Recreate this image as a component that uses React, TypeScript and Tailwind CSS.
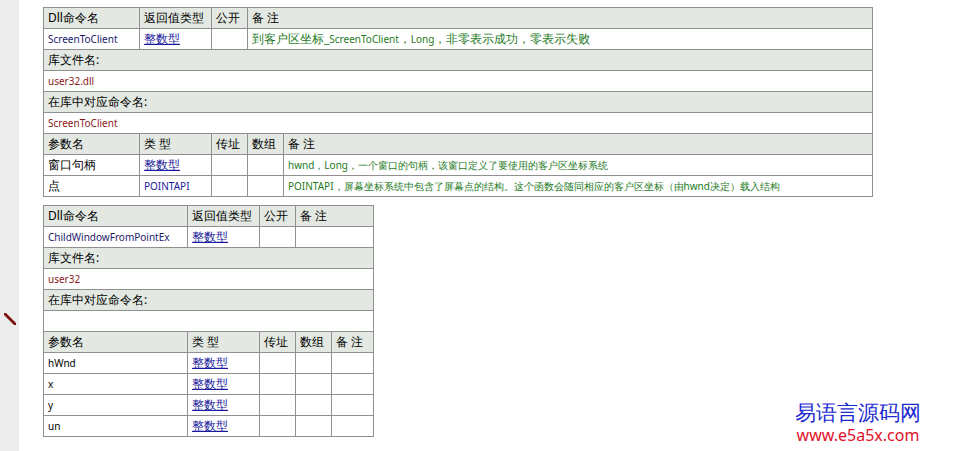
const cjk = "font-['Noto_Sans_CJK_SC'] text-[12px]";
const mono = "font-['Liberation_Mono'] text-[10px]";

function Cell({ children, head, className = '', colSpan }: { children?: React.ReactNode; head?: boolean; className?: string; colSpan?: number }) {
  return (
    <td colSpan={colSpan} className={`border border-[#909090] h-[21px] px-1 py-0 leading-[20px] whitespace-nowrap ${head ? 'bg-[#e3e9e2] text-black ' + cjk : ''} ${className}`}>
      {children}
    </td>
  );
}

const link = `${cjk} text-[#1a1a9c] underline`;
const green = 'text-[#1e7a1e]';
const red = `${mono} text-[#8b1a1a]`;

export default function App() {
  return (
    <div className="w-[953px] h-[451px] bg-white flex overflow-hidden">
      <div className="w-[19px] bg-[#ececec] flex items-start pt-[312px] justify-center">
        <svg width="14" height="14" viewBox="0 0 14 14"><path d="M1 1 L3 1 L13 11 L13 13 L11 13 L1 3 Z" fill="#7a1010" /></svg>
      </div>
      <div className="pl-[24px] pt-[7px] flex flex-col gap-[8px] relative flex-1">
        <table className="border-collapse table-fixed w-[830px]">
          <colgroup>
            <col className="w-[96px]" /><col className="w-[72px]" /><col className="w-[36px]" /><col className="w-[36px]" /><col />
          </colgroup>
          <tbody>
            <tr><Cell head>Dll命令名</Cell><Cell head>返回值类型</Cell><Cell head>公开</Cell><Cell head colSpan={2}>备 注</Cell></tr>
            <tr><Cell className={`${mono} text-[#1a1a6c]`}>ScreenToClient</Cell><Cell className={link}>整数型</Cell><Cell /><Cell colSpan={2} className={`${cjk} ${green}`}>到客户区坐标_<span className={mono}>ScreenToClient</span>，<span className={mono}>Long</span>，非零表示成功，零表示失败</Cell></tr>
            <tr><Cell head colSpan={5}>库文件名:</Cell></tr>
            <tr><Cell colSpan={5} className={red}>user32.dll</Cell></tr>
            <tr><Cell head colSpan={5}>在库中对应命令名:</Cell></tr>
            <tr><Cell colSpan={5} className={red}>ScreenToClient</Cell></tr>
            <tr><Cell head>参数名</Cell><Cell head>类 型</Cell><Cell head>传址</Cell><Cell head>数组</Cell><Cell head>备 注</Cell></tr>
            <tr><Cell className={cjk}>窗口句柄</Cell><Cell className={link}>整数型</Cell><Cell /><Cell /><Cell className={`${mono} ${green}`}>hwnd，Long，一个窗口的句柄，该窗口定义了要使用的客户区坐标系统</Cell></tr>
            <tr><Cell className={cjk}>点</Cell><Cell className={`${mono} text-[#1a1a9c]`}>POINTAPI</Cell><Cell /><Cell /><Cell className={`${mono} ${green} overflow-hidden`}>POINTAPI，屏幕坐标系统中包含了屏幕点的结构。这个函数会随同相应的客户区坐标（由hwnd决定）载入结构</Cell></tr>
          </tbody>
        </table>
        <table className="border-collapse table-fixed w-[331px]">
          <colgroup>
            <col className="w-[144px]" /><col className="w-[72px]" /><col className="w-[36px]" /><col className="w-[36px]" /><col />
          </colgroup>
          <tbody>
            <tr><Cell head>Dll命令名</Cell><Cell head>返回值类型</Cell><Cell head>公开</Cell><Cell head colSpan={2}>备 注</Cell></tr>
            <tr><Cell className={`${mono} text-[#1a1a6c]`}>ChildWindowFromPointEx</Cell><Cell className={link}>整数型</Cell><Cell /><Cell colSpan={2} /></tr>
            <tr><Cell head colSpan={5}>库文件名:</Cell></tr>
            <tr><Cell colSpan={5} className={red}>user32</Cell></tr>
            <tr><Cell head colSpan={5}>在库中对应命令名:</Cell></tr>
            <tr><Cell colSpan={5} /></tr>
            <tr><Cell head>参数名</Cell><Cell head>类 型</Cell><Cell head>传址</Cell><Cell head>数组</Cell><Cell head>备 注</Cell></tr>
            {['hWnd', 'x', 'y', 'un'].map((n) => (
              <tr key={n}><Cell className={mono}>{n}</Cell><Cell className={link}>整数型</Cell><Cell /><Cell /><Cell /></tr>
            ))}
          </tbody>
        </table>
        <div className="absolute left-[776px] top-[400px] flex flex-col items-center leading-none">
          <span className="font-['Noto_Sans_CJK_SC'] text-[21px] leading-[24px] text-[#1a2ad0]">易语言源码网</span>
          <span className="font-['Liberation_Serif'] text-[16px] leading-[18px] text-[#e0102a] mt-[2px]">www.e5a5x.com</span>
        </div>
      </div>
    </div>
  );
}
